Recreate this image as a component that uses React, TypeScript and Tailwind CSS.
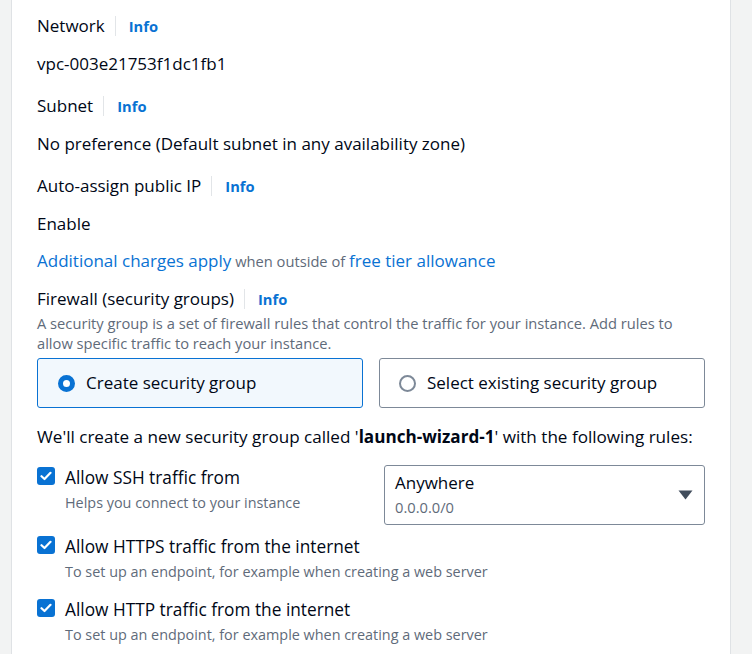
function InfoLabel({ label }: { label: string }) {
  return (
    <div className="flex items-center h-6">
      <span className="text-[17px] leading-6 text-[#000716]">{label}</span>
      <span className="ml-[10px] mr-[13px] h-[20px] w-px bg-[#e2e5e8]" />
      <span className="text-[14.7px] font-bold text-[#0972d3] leading-6">Info</span>
    </div>
  );
}

function Check() {
  return (
    <span className="mt-[1px] flex h-[18px] w-[18px] shrink-0 items-center justify-center rounded-[3px] bg-[#0972d3]">
      <svg width="12" height="10" viewBox="0 0 12 10" fill="none">
        <path d="M1.5 5.2 L4.5 8 L10.5 1.8" stroke="white" strokeWidth="2.2" strokeLinecap="round" strokeLinejoin="round" />
      </svg>
    </span>
  );
}

function Rule({ title, desc }: { title: string; desc: string }) {
  return (
    <div className="flex gap-[10px]">
      <Check />
      <div className="flex flex-col">
        <span className="text-[17.3px] leading-6 text-[#000716]">{title}</span>
        <span className="mt-[3px] text-[14.4px] leading-5 text-[#5f6b7a]">{desc}</span>
      </div>
    </div>
  );
}

export default function App() {
  return (
    <div className="flex h-[654px] w-[752px] overflow-hidden bg-[#f2f3f3]" style={{ fontFamily: '"Open Sans", sans-serif' }}>
      <div className="ml-[11px] w-[720px] border-x border-[#dfe2e5] bg-white pl-[25px] pr-[25px] pt-[14px]">
        <div className="flex flex-col">
          <InfoLabel label="Network" />
          <div className="mt-[14px] text-[17px] leading-6 text-[#000716]">vpc-003e21753f1dc1fb1</div>
          <div className="mt-[18px]"><InfoLabel label="Subnet" /></div>
          <div className="mt-[14px] text-[17px] leading-6 text-[#000716]">No preference (Default subnet in any availability zone)</div>
          <div className="mt-[18px]"><InfoLabel label="Auto-assign public IP" /></div>
          <div className="mt-[14px] text-[17px] leading-6 text-[#000716]">Enable</div>
          <div className="mt-[13px] leading-6">
            <span className="text-[17px] text-[#0972d3]">Additional charges apply</span>
            <span className="text-[14.7px] text-[#5f6b7a]"> when outside of </span>
            <span className="text-[17px] text-[#0972d3]">free tier allowance</span>
          </div>
          <div className="mt-[14px]"><InfoLabel label="Firewall (security groups)" /></div>
          <div className="mt-[2px] text-[14.7px] leading-5 text-[#5f6b7a]">
            A security group is a set of firewall rules that control the traffic for your instance. Add rules to allow specific traffic to reach your instance.
          </div>
          <div className="mt-[5px] grid grid-cols-2 gap-4">
            <div className="flex h-[50px] items-center rounded-[3px] border border-[#0972d3] bg-[#f2f8fd] pl-[20px]">
              <span className="h-[17px] w-[17px] rounded-full border-[5px] border-[#0972d3] bg-white" />
              <span className="ml-[11px] text-[17px] text-[#000716]">Create security group</span>
            </div>
            <div className="flex h-[50px] items-center rounded-[3px] border border-[#7d8998] bg-white pl-[19px]">
              <span className="h-[17px] w-[17px] rounded-full border-2 border-[#7d8998] bg-white" />
              <span className="ml-[11px] text-[17px] text-[#000716]">Select existing security group</span>
            </div>
          </div>
          <div className="mt-[17px] text-[17.1px] leading-6 text-[#000716]">
            We'll create a new security group called '<span className="font-bold">launch-wizard-1</span>' with the following rules:
          </div>
          <div className="mt-[16px] flex items-start">
            <div className="flex-1 pt-[1px]">
              <Rule title="Allow SSH traffic from" desc="Helps you connect to your instance" />
            </div>
            <div className="flex h-[60px] w-[321px] items-center justify-between rounded-[3px] border border-[#7d8998] pl-[10px] pr-[11px]">
              <div className="flex flex-col">
                <span className="text-[17px] leading-6 text-[#000716]">Anywhere</span>
                <span className="text-[14.7px] leading-6 text-[#5f6b7a]">0.0.0.0/0</span>
              </div>
              <svg width="15" height="10" viewBox="0 0 15 10"><path d="M0.5 0.5 H14.5 L7.5 9.5 Z" fill="#414d5c" /></svg>
            </div>
          </div>
          <div className="mt-[10px]"><Rule title="Allow HTTPS traffic from the internet" desc="To set up an endpoint, for example when creating a web server" /></div>
          <div className="mt-[16px]"><Rule title="Allow HTTP traffic from the internet" desc="To set up an endpoint, for example when creating a web server" /></div>
        </div>
      </div>
    </div>
  );
}
